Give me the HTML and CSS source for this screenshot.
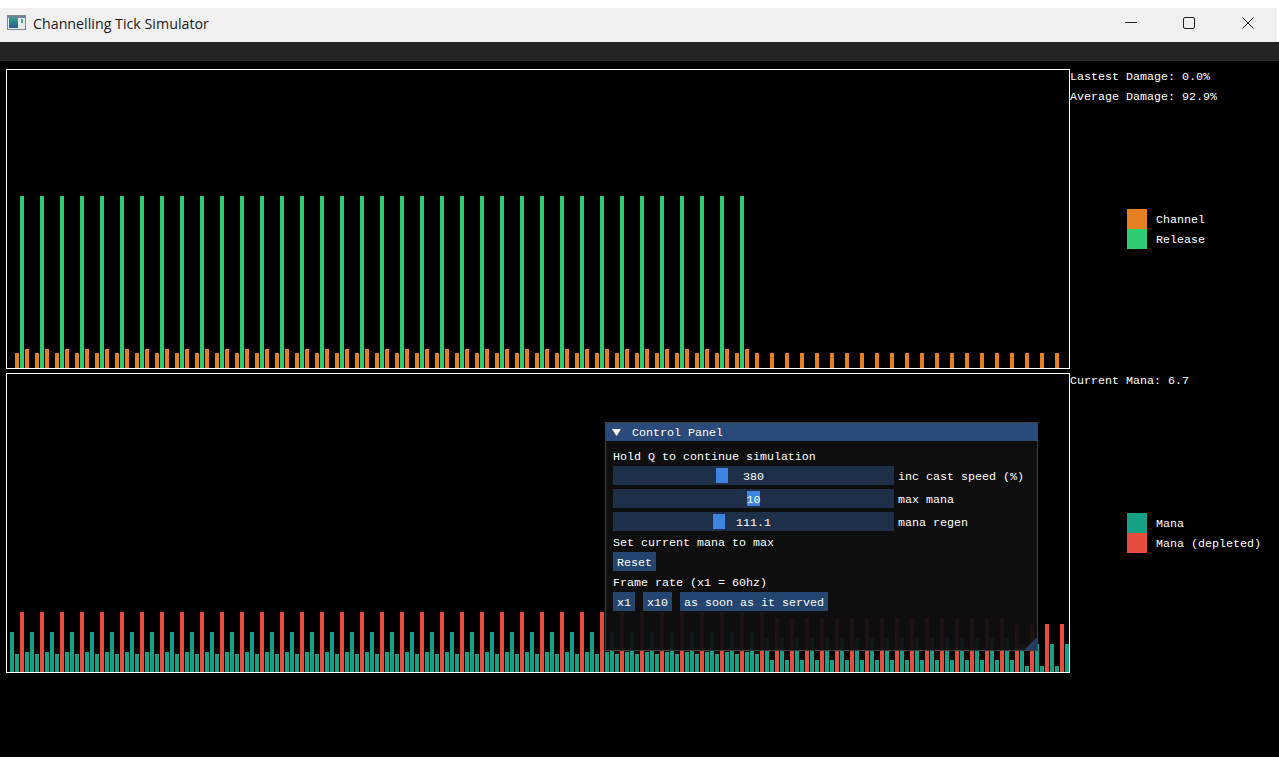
FILE: index.html
```html
<!DOCTYPE html>
<html lang="en">
<head>
  <meta charset="UTF-8">
  <title>Channelling Tick Simulator</title>
  <link rel="stylesheet" href="styles.css">
</head>
<body>
  <header class="titlebar">
    <svg class="app-icon" width="19" height="15" viewBox="0 0 19 15">
      <defs>
        <linearGradient id="iconFill" x1="0" y1="0" x2="0" y2="1">
          <stop offset="0" stop-color="#2f9f8c"/>
          <stop offset="1" stop-color="#2a5c96"/>
        </linearGradient>
      </defs>
      <rect x="0.5" y="0.5" width="18" height="14" fill="#e6e9ea" stroke="#7d8b90"/>
      <rect x="1" y="1" width="17" height="2" fill="#6f8496"/>
      <rect x="2" y="3" width="9" height="10" fill="url(#iconFill)"/>
      <rect x="14" y="4" width="2" height="4" fill="#4fa59a"/>
    </svg>
    <span class="app-name">Channelling Tick Simulator</span>
    <div class="win-buttons">
      <div class="win-btn">
        <svg width="12" height="12" viewBox="0 0 12 12"><path d="M0 5.5H12" stroke="#222" fill="none"/></svg>
      </div>
      <div class="win-btn">
        <svg width="12" height="12" viewBox="0 0 12 12"><rect x="0.5" y="0.5" width="11" height="11" rx="1.5" stroke="#222" fill="none"/></svg>
      </div>
      <div class="win-btn">
        <svg width="12" height="12" viewBox="0 0 12 12"><path d="M0.5 0.5L11.5 11.5M11.5 0.5L0.5 11.5" stroke="#222" fill="none"/></svg>
      </div>
    </div>
  </header>
  <div class="menubar"></div>

  <main class="client">
    <section class="row">
      <div class="plot"><div class="bars" id="tickBars"></div></div>
      <aside class="side">
        <div class="stats">
          <div>Lastest Damage: 0.0%</div>
          <div>Average Damage: 92.9%</div>
        </div>
        <div class="legend legend-ticks">
          <div class="legend-item"><span class="swatch orange"></span><span class="legend-label">Channel</span></div>
          <div class="legend-item"><span class="swatch green"></span><span class="legend-label">Release</span></div>
        </div>
      </aside>
    </section>

    <section class="row">
      <div class="plot"><div class="bars" id="manaBars"></div></div>
      <aside class="side">
        <div class="stats">
          <div>Current Mana: 6.7</div>
        </div>
        <div class="legend legend-mana">
          <div class="legend-item"><span class="swatch teal"></span><span class="legend-label">Mana</span></div>
          <div class="legend-item"><span class="swatch red"></span><span class="legend-label">Mana (depleted)</span></div>
        </div>
      </aside>
    </section>

    <div class="panel">
      <div class="panel-title">
        <svg class="panel-arrow" width="9" height="7" viewBox="0 0 9 7"><polygon points="0,0 9,0 4.5,7" fill="#fff"/></svg>
        <span class="panel-name">Control Panel</span>
      </div>
      <div class="panel-body">
        <div class="line">Hold Q to continue simulation</div>
        <div class="control">
          <div class="slider"><span class="grab" style="left:103px;width:12px"></span><span class="value">380</span></div>
          <span class="control-label">inc cast speed (%)</span>
        </div>
        <div class="control">
          <div class="slider"><span class="grab" style="left:134px;width:13px"></span><span class="value">10</span></div>
          <span class="control-label">max mana</span>
        </div>
        <div class="control">
          <div class="slider"><span class="grab" style="left:100px;width:12px"></span><span class="value">111.1</span></div>
          <span class="control-label">mana regen</span>
        </div>
        <div class="line">Set current mana to max</div>
        <div class="buttons"><button class="btn">Reset</button></div>
        <div class="line">Frame rate (x1 = 60hz)</div>
        <div class="buttons">
          <button class="btn">x1</button>
          <button class="btn">x10</button>
          <button class="btn">as soon as it served</button>
        </div>
      </div>
      <svg class="grip" width="13" height="13" viewBox="0 0 13 13"><polygon points="0,13 13,13 13,0" fill="#233b5e"/></svg>
    </div>
  </main>

  <script>
    function addBar(parent, height, color) {
      const bar = document.createElement("span");
      bar.className = "bar " + color;
      bar.style.height = height + "px";
      parent.appendChild(bar);
    }

    // x is the left edge of a bar in page pixels, one slot every 5px
    function tickBar(parent, x) {
      if (x <= 745) {
        const phase = (x - 10) % 20;
        if (phase === 5) addBar(parent, 15, "orange");
        else if (phase === 10) addBar(parent, 172, "green");
        else if (phase === 15) addBar(parent, 19, "orange");
        else addBar(parent, 0, "orange");
      } else {
        addBar(parent, x >= 755 && (x - 755) % 15 === 0 ? 15 : 0, "orange");
      }
    }

    function manaBar(parent, x) {
      if (x <= 760) {
        const phase = (x - 10) % 20;
        if (phase === 0) addBar(parent, 40, "teal");
        else if (phase === 5) addBar(parent, 18, "teal");
        else if (phase === 10) addBar(parent, 60, "red");
        else addBar(parent, 20, "teal");
      } else {
        const phase = (x - 760) % 15;
        const late = x > 1010;
        if (phase === 0) addBar(parent, late ? 48 : 54, "red");
        else if (phase === 5) addBar(parent, late ? 28 : 34, "teal");
        else addBar(parent, late ? 6 : 12, "teal");
      }
    }

    const tickBars = document.getElementById("tickBars");
    const manaBars = document.getElementById("manaBars");
    for (let x = 10; x <= 1065; x += 5) {
      tickBar(tickBars, x);
      manaBar(manaBars, x);
    }
  </script>
</body>
</html>
```

FILE: styles.css
```css
* {
  box-sizing: border-box;
}
html, body {
  margin: 0;
  height: 100%;
  overflow: hidden;
}
body {
  background-color: #fff;
  padding-top: 8px;
  font-family: "Liberation Mono", monospace;
  font-size: 11.67px;
  color: #fff;
}

/* window chrome */
.titlebar {
  display: flex;
  align-items: center;
  width: 1277px;
  height: 34px;
  padding: 0 0 4px 7px;
  background-color: #f0f0f0;
  color: #1a1a1a;
  font-family: "Open Sans", sans-serif;
  font-size: 14.25px;
}
.app-icon {
  margin: 0 7px 1px 0;
}
.win-buttons {
  display: flex;
  margin-left: auto;
}
.win-btn {
  display: flex;
  align-items: center;
  justify-content: center;
  width: 58.5px;
  height: 30px;
}
.menubar {
  height: 19px;
  background-color: #252525;
}

/* client area */
.client {
  position: relative;
  display: flex;
  flex-direction: column;
  gap: 4px;
  height: 696px;
  padding: 8px 0 0 6px;
  background-color: #000;
}
.row {
  display: flex;
  height: 300px;
}
.plot {
  flex: 0 0 1064px;
  border: 1px solid #fff;
}
.bars {
  display: flex;
  align-items: flex-end;
  gap: 1px;
  height: 100%;
  padding-left: 3px;
  overflow: hidden;
}
.bar {
  flex: 0 0 4px;
}
.orange { background-color: #e67e22; }
.green { background-color: #2ecc71; }
.teal { background-color: #16a085; }
.red { background-color: #e74c3c; }

.side {
  flex: 1;
  padding-top: 1px;
  line-height: 14px;
}
.stats {
  display: flex;
  flex-direction: column;
  gap: 6px;
}
.legend {
  padding-left: 57px;
}
.legend-ticks {
  margin-top: 105px;
}
.legend-mana {
  margin-top: 125px;
}
.legend-item {
  display: flex;
  align-items: center;
  gap: 9px;
  height: 20px;
}
.legend-label {
  padding-top: 2px;
}
.swatch {
  width: 20px;
  height: 20px;
}

/* floating control panel */
.panel {
  position: absolute;
  left: 605px;
  top: 361px;
  width: 433px;
  height: 229px;
  border: 1px solid #3e3e47;
  background-color: rgba(15, 15, 15, 0.94);
  line-height: 13px;
}
.panel-title {
  display: flex;
  align-items: center;
  height: 18px;
  padding-left: 6px;
  background-color: #294a7a;
}
.panel-arrow {
  margin-right: 11px;
}
.panel-name {
  padding-top: 2px;
}
.panel-body {
  display: flex;
  flex-direction: column;
  gap: 4px;
  padding: 8px 7px;
}
.line {
  height: 13px;
  padding-top: 2px;
}
.control {
  display: flex;
  align-items: center;
  gap: 4px;
}
.control-label {
  padding-top: 3px;
}
.slider {
  position: relative;
  display: flex;
  align-items: center;
  justify-content: center;
  width: 281px;
  height: 19px;
  padding-top: 3px;
  background-color: #1d2f49;
}
.grab {
  position: absolute;
  top: 2px;
  height: 15px;
  background-color: #3d85e0;
}
.value {
  position: relative;
}
.buttons {
  display: flex;
  gap: 8px;
}
.btn {
  height: 19px;
  padding: 3px 4px 0;
  border: 0;
  background-color: #24456f;
  color: #fff;
  font: inherit;
}
.grip {
  position: absolute;
  right: 0;
  bottom: 0;
}
```
